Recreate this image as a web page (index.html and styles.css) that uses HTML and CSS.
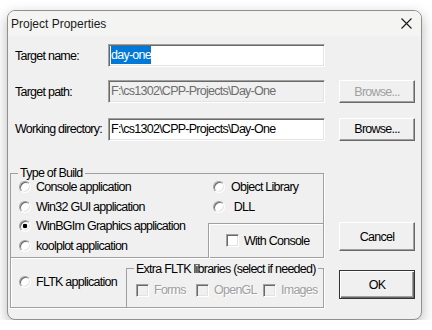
FILE: index.html
```html
<!DOCTYPE html>
<html lang="en">
<head>
    <meta charset="UTF-8" />
    <title>Project Properties</title>
    <link rel="stylesheet" href="styles.css">
</head>
<body>
    <div class="window">
        <div class="titlebar">
            <span class="title">Project Properties</span>
            <svg class="close" width="11" height="11" viewBox="0 0 11 11">
                <path d="M0.5 0.5 L10.5 10.5 M10.5 0.5 L0.5 10.5" stroke="#1a1a1a" stroke-width="1.1" fill="none"/>
            </svg>
        </div>

        <div class="dialog">
            <div class="fields">
                <label class="field-label">Target name:</label>
                <div class="textbox"><span class="selected">day-one</span></div>
                <span></span>

                <label class="field-label">Target path:</label>
                <div class="textbox disabled">F:\cs1302\CPP-Projects\Day-One</div>
                <button class="btn" disabled>Browse...</button>

                <label class="field-label row3">Working directory:</label>
                <div class="textbox row3">F:\cs1302\CPP-Projects\Day-One</div>
                <button class="btn row3">Browse...</button>
            </div>

            <div class="lower">
                <div class="build-area">
                    <fieldset class="group build">
                        <legend>Type of Build</legend>
                        <div class="build-cols">
                            <div class="col-left">
                                <div class="option"><span class="radio"></span>Console application</div>
                                <div class="option"><span class="radio"></span>Win32 GUI application</div>
                                <div class="option"><span class="radio checked"></span>WinBGIm Graphics application</div>
                                <div class="option"><span class="radio"></span>koolplot application</div>
                            </div>
                            <div class="col-right">
                                <div class="option"><span class="radio"></span>Object Library</div>
                                <div class="option"><span class="radio"></span>&nbsp;DLL</div>
                                <div class="console-box">
                                    <span class="check"></span>With Console
                                </div>
                            </div>
                        </div>
                    </fieldset>

                    <div class="fltk-row">
                        <div class="fltk-box">
                            <div class="option"><span class="radio"></span>FLTK application</div>
                        </div>
                        <fieldset class="group extra">
                            <legend>Extra FLTK libraries (select if needed)</legend>
                            <div class="extra-list">
                                <div class="option off"><span class="check"></span>Forms</div>
                                <div class="option off"><span class="check"></span>OpenGL</div>
                                <div class="option off"><span class="check"></span>Images</div>
                            </div>
                        </fieldset>
                    </div>
                </div>

                <div class="actions">
                    <button class="btn tall">Cancel</button>
                    <button class="btn tall default">OK</button>
                </div>
            </div>
        </div>
    </div>
</body>
</html>
```

FILE: styles.css
```css
body {
    margin: 0;
    background: #ffffff;
    font-family: "Liberation Sans", Arial, sans-serif;
    font-size: 12.5px;
    letter-spacing: -0.75px;
    color: #000;
}
.window {
    margin: 10px 0 0 7px;
    width: 413px;
    height: 308px;
    border: 1px solid #8f8f8f;
    border-radius: 8px;
    background: #f0f0f0;
    box-shadow: 0 5px 14px rgba(0,0,0,0.28);
    overflow: hidden;
}
.titlebar {
    height: 25px;
    background: #f4f5f2;
    display: flex;
    align-items: center;
    justify-content: space-between;
    padding: 0 9px 0 3px;
}
.title {
    font-size: 12px;
    letter-spacing: 0;
    color: #1a1a1a;
}
.close {
    display: block;
}
.dialog {
    padding: 8px 0 0 0;
}
.fields {
    display: grid;
    grid-template-columns: 79px 217px 76px;
    grid-template-rows: 23px 23px 23px;
    column-gap: 14px;
    row-gap: 13px;
    padding-left: 7px;
    align-items: center;
}
.row3 {
    margin-top: 3px;
}
.field-label {
    white-space: nowrap;
}
.textbox {
    box-sizing: border-box;
    height: 23px;
    background: #fff;
    border: 1px solid;
    border-color: #a0a0a0 #ffffff #ffffff #a0a0a0;
    box-shadow: inset 1px 1px 0 #696969, inset -1px -1px 0 #e3e3e3;
    padding: 0 2px;
    line-height: 20px;
    white-space: nowrap;
    overflow: hidden;
}
.textbox.disabled {
    background: #f0f0f0;
    color: #6d6d6d;
}
.selected {
    background: #0078d7;
    color: #fff;
    padding: 2px 0;
}
.btn {
    box-sizing: border-box;
    height: 23px;
    font-family: inherit;
    font-size: inherit;
    letter-spacing: inherit;
    color: #000;
    background: #f0f0f0;
    border: 1px solid;
    border-color: #ffffff #696969 #696969 #ffffff;
    box-shadow: inset -1px -1px 0 #a0a0a0;
    padding: 0;
}
.btn:disabled {
    color: #a0a0a0;
}
.lower {
    display: grid;
    grid-template-columns: 314px 76px;
    column-gap: 15px;
    margin: 28px 0 0 2px;
}
.group {
    margin: 0;
    padding: 0;
    border: 1px solid #a0a0a0;
    box-shadow: 1px 1px 0 #fff;
    min-width: 0;
}
.group legend {
    margin-left: 7px;
    padding: 0 2px;
    line-height: 12px;
    white-space: nowrap;
}
.build {
    width: 314px;
    box-sizing: border-box;
}
.build-cols {
    display: grid;
    grid-template-columns: 197px 1fr;
    margin-top: -2px;
}
.col-left {
    padding-left: 8px;
}
.col-right {
    padding-left: 5px;
    display: flex;
    flex-direction: column;
}
.option {
    display: flex;
    align-items: center;
    height: 19.75px;
    white-space: nowrap;
}
.radio {
    box-sizing: border-box;
    width: 12px;
    height: 12px;
    margin-right: 5px;
    border-radius: 50%;
    border: 1px solid;
    border-color: #a0a0a0 #ffffff #ffffff #a0a0a0;
    box-shadow: inset 1px 1px 0 #696969, inset -1px -1px 0 #e3e3e3;
    background: #fff;
    flex: none;
}
.radio.checked {
    background: radial-gradient(circle, #000 0 2px, #fff 2.6px);
}
.col-right .radio {
    margin-right: 6px;
}
.console-box {
    display: flex;
    align-items: center;
    margin: 6px 0 -1px -5px;
    height: 35px;
    padding-left: 17px;
    border-top: 1px solid #a0a0a0;
    border-left: 1px solid #a0a0a0;
    box-shadow: inset 1px 1px 0 #fff;
    box-sizing: border-box;
}
.check {
    box-sizing: border-box;
    width: 13px;
    height: 13px;
    margin-right: 5px;
    background: #fff;
    border: 1px solid;
    border-color: #a0a0a0 #ffffff #ffffff #a0a0a0;
    box-shadow: inset 1px 1px 0 #696969, inset -1px -1px 0 #e3e3e3;
    flex: none;
}
.fltk-row {
    display: grid;
    grid-template-columns: 116px 198px;
}
.fltk-box {
    height: 50px;
    box-sizing: border-box;
    border-left: 1px solid #a0a0a0;
    border-bottom: 1px solid #a0a0a0;
    box-shadow: inset 1px 0 0 #fff, 0 1px 0 #fff;
    padding-left: 8px;
    display: flex;
    align-items: center;
}
.extra {
    margin-top: 5px;
    height: 45px;
    box-sizing: border-box;
}
.extra-list {
    display: grid;
    grid-template-columns: 60px 67px auto;
    padding: 6px 0 0 9px;
}
.option.off {
    color: #a0a0a0;
    text-shadow: 1px 1px 0 #fff;
}
.option.off .check {
    background: #f0f0f0;
}
.actions {
    display: flex;
    flex-direction: column;
    gap: 19px;
    padding-top: 55px;
}
.btn.tall {
    height: 29px;
}
.btn.default {
    border: 1px solid #333;
    box-shadow: inset 1px 1px 0 #fff, inset -1px -1px 0 #696969, inset -2px -2px 0 #a0a0a0;
}
```
